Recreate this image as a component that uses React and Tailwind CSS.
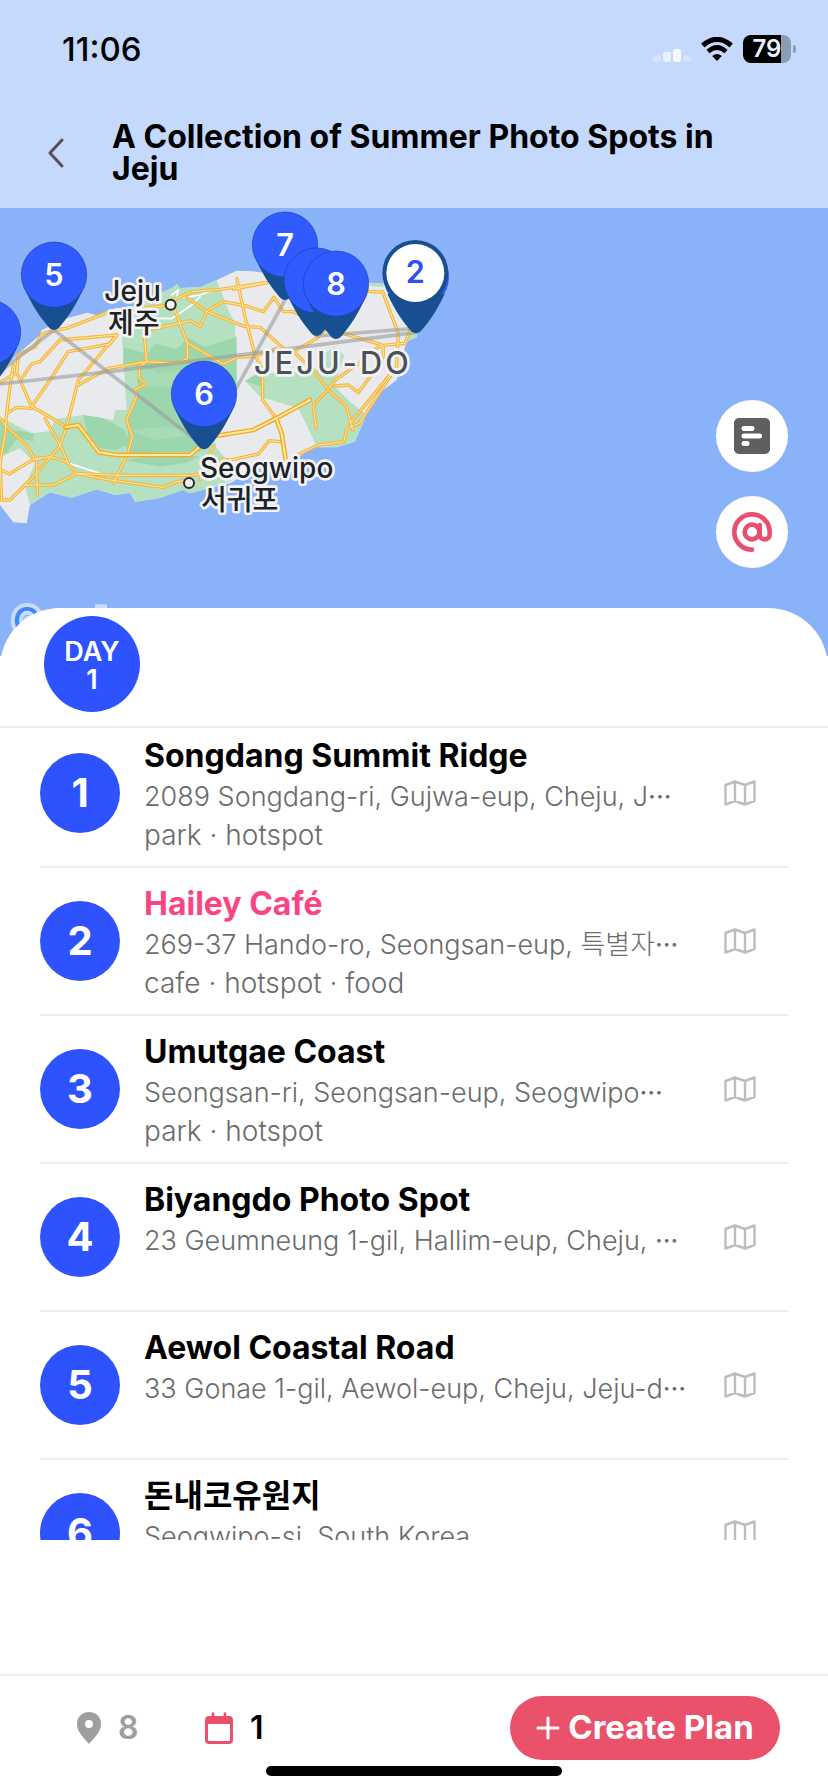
import React from "react";

const places = [
  { name: "Songdang Summit Ridge", address: "2089 Songdang-ri, Gujwa-eup, Cheju, J", cut: true, tags: "park · hotspot" },
  { name: "Hailey Café", address: "269-37 Hando-ro, Seongsan-eup, 특별자", cut: true, tags: "cafe · hotspot · food", active: true },
  { name: "Umutgae Coast", address: "Seongsan-ri, Seongsan-eup, Seogwipo", cut: true, tags: "park · hotspot" },
  { name: "Biyangdo Photo Spot", address: "23 Geumneung 1-gil, Hallim-eup, Cheju, ", cut: true },
  { name: "Aewol Coastal Road", address: "33 Gonae 1-gil, Aewol-eup, Cheju, Jeju-d", cut: true },
  { name: "돈내코유원지", address: "Seogwipo-si, South Korea", cut: false },
];

const roads = [
  "0,548 50,518 55,465 105,440 125,402 162,390 200,385 330,335 420,325 490,318 520,300 575,275 660,268 800,248",
  "55,465 50,518 95,620 135,642 197,680 240,675",
  "65,535 95,492 120,485 180,420 350,405 330,432 205,455 150,540 95,620",
  "350,405 235,540 200,680 178,740 105,825 75,855 30,900 5,900 0,780",
  "235,555 325,505 440,485 530,490 562,475 562,430 545,385 525,330 510,310",
  "40,495 30,560 20,640 15,705 0,790",
  "20,640 50,622 95,625",
  "0,655 20,680 80,735 105,780 125,775",
  "0,808 28,822 100,778 150,770 200,785 228,820 330,840 490,862 530,845 570,840",
  "75,855 160,855 228,822",
  "110,785 112,885",
  "135,655 180,735 205,790",
  "228,820 350,826 570,826 600,822",
  "340,850 382,765 397,710 380,660 410,590 405,570 437,552 418,535 418,500 440,485 432,400",
  "440,390 500,378 570,362 600,380 620,335",
  "565,430 670,492 712,472 765,468 830,445",
  "560,292 620,335 735,380 780,382 850,445",
  "620,335 668,305 740,318 790,335 822,292 850,335 880,335 910,350",
  "710,235 735,350 765,465 788,510 788,600 828,655",
  "700,268 800,248",
  "1108,275 1148,276 1195,400 1190,500 1050,670",
  "1030,400 1150,436 1215,430 1230,390",
  "880,455 950,415 975,390",
  "880,455 940,510 985,570 1040,620 1058,690",
  "985,570 940,615 948,685",
  "985,570 1000,545 1090,480 1135,440 1150,440 1150,470 1125,510 1075,578 1045,555 1005,558",
  "1190,500 1078,670 1040,685 1032,725 955,735 880,770",
  "660,780 700,778 775,762 808,722 840,725",
  "600,840 640,740",
];

const highways = [
  "197,682 235,675 297,757 350,765 570,765 612,730",
  "645,708 760,690 828,655 930,600",
  "828,655 845,700 857,780",
];

const pins = [
  { n: "", x: -36, y: 397 },
  { n: "5", x: 162, y: 224 },
  { n: "7", x: 855, y: 134 },
  { n: "", x: 950, y: 242 },
  { n: "8", x: 1008, y: 251 },
  { n: "6", x: 612, y: 582 },
];

const pinBody = "M-86 47 C-60 105 -35 135 -14 160 Q0 172 14 160 C35 135 60 105 86 47 Z";

function Pin({ n, x, y }) {
  return (
    <g transform={`translate(${x} ${y})`}>
      <path d={pinBody} fill="#174f91" />
      <circle r="98" fill="#2f5bff" stroke="#1f3fb0" strokeWidth="2" />
      <text y="33" textAnchor="middle" fontSize="92" fontWeight="600" fill="#fff">{n}</text>
    </g>
  );
}

function Label({ x, y, children, size = 84, className = "", fill = "#202124" }) {
  return (
    <text x={x} y={y} fontSize={size} fontWeight="500" fill={fill} stroke="#f1f3f6" strokeWidth="16" strokeLinejoin="round" paintOrder="stroke" className={className}>
      {children}
    </text>
  );
}

function IslandMap() {
  return (
    <svg className="absolute top-0 left-0" width="828" height="448" viewBox="0 24 2484 1344" role="img" aria-label="Map of Jeju">
      <path fill="#e8eaed" d="M0 515 L50 465 L120 405 L125 390 L200 355 L262 338 L290 346 L345 325 L395 320 L440 300 L520 262 L530 252 L540 264 L600 262 L650 240 L710 212 L760 214 L840 225 L960 240 L1110 248 L1160 252 L1200 330 L1220 365 L1252 400 L1250 412 L1225 422 L1215 440 L1200 500 L1190 540 L1130 585 L1095 650 L1065 725 L1010 742 L945 742 L870 785 L760 810 L690 850 L640 862 L570 880 L550 870 L475 895 L405 905 L390 878 L345 885 L290 868 L215 893 L150 877 L90 915 L80 970 L40 967 L0 915 Z" />
      <g fill="#b5e1c1">
        <path d="M365 395 L395 320 L440 300 L520 262 L530 252 L540 264 L600 262 L650 240 L685 330 L705 370 L710 560 L690 600 L640 700 L650 745 L690 790 L700 840 L640 862 L570 880 L550 870 L475 895 L405 905 L390 878 L345 885 L290 868 L215 893 L150 877 L90 915 L75 860 L105 790 L60 745 L0 772 L0 650 L95 700 L150 693 L165 657 L250 645 L340 660 L345 630 L380 630 Z" />
        <path d="M735 543 L800 520 L945 515 L975 460 L1005 440 L1033 465 L1020 505 L1005 560 L1050 605 L1100 645 L1065 725 L1010 742 L950 738 L895 625 L780 590 Z" />
        <path d="M1225 400 L1253 400 L1250 412 L1222 424 Z M1110 248 L1150 252 L1150 262 L1110 258 Z" />
      </g>
      <g fill="#9bd6ad">
        <path d="M370 440 L440 462 L465 430 L530 447 L565 415 L615 440 L650 430 L710 410 L710 560 L690 600 L640 700 L600 755 L390 760 L370 730 L385 700 L375 660 L410 590 L415 500 L370 500 Z" />
        <path d="M250 645 L310 655 L375 690 L385 730 L350 750 L300 745 L262 700 Z" />
        <path d="M375 780 L440 770 L600 768 L560 788 L480 800 Z" />
        <path d="M0 660 L40 690 L100 700 L100 725 L55 712 L20 760 L0 765 Z" />
        <path d="M735 543 L780 515 L785 560 Z" />
      </g>
      <path d="M420 500 L480 520 L600 500 L640 520 L570 560 L430 560 Z M385 690 L500 680 L600 700 L470 720 Z" fill="#a8dcb7" />
      <g fill="none" strokeLinejoin="round" strokeLinecap="round">
        <g stroke="#fff" strokeWidth="5">
          <path d="M200 788 L325 828 M515 285 L535 270 L530 290 L560 292 L600 285 L638 270 M480 355 L515 356 L575 315 L600 290 M400 340 L440 320 L490 322 M600 835 L690 815 L760 800" />
        </g>
        <g stroke="#f6b73c" strokeWidth="10">
          {roads.map((r) => <polyline key={r} points={r} />)}
        </g>
        <g stroke="#fde9a9" strokeWidth="3">
          {roads.map((r) => <polyline key={r} points={r} />)}
        </g>
        <g stroke="#f6a91f" strokeWidth="14">
          {highways.map((r) => <polyline key={r} points={r} />)}
        </g>
        <g stroke="#fde79b" strokeWidth="6">
          {highways.map((r) => <polyline key={r} points={r} />)}
        </g>
        <g stroke="#9b9b9b" strokeOpacity="0.6" strokeWidth="11">
          <path d="M0 552 L330 515 L1249 397" />
          <path d="M950 408 L1249 385" />
          <path d="M0 515 L162 390 L612 740 L855 300" />
        </g>
      </g>
      <g fill="#f4f4f4" stroke="#2b2b2b" strokeWidth="6">
        <circle cx="512" cy="314" r="15" />
        <circle cx="567" cy="849" r="15" />
      </g>
      <Label x={313} y={302}>Jeju</Label>
      <Label x={324} y={399}>제주</Label>
      <Label x={600} y={834}>Seogwipo</Label>
      <Label x={603} y={929}>서귀포</Label>
      <Label x={762} y={522} size={92} fill="#4d5156" className="tracking-widest">JEJU-DO</Label>
      {pins.map((p) => <Pin key={`${p.x}-${p.y}`} {...p} />)}
      <circle cx="1249" cy="231" r="98" fill="#2f5bff" />
      <g transform="translate(1246 219)">
        <circle r="99" fill="#174f91" />
        <path d={pinBody} fill="#174f91" transform="translate(2 15)" />
        <circle y="-2" r="87" fill="#fff" />
        <text y="31" textAnchor="middle" fontSize="92" fontWeight="600" fill="#2f50f0">2</text>
      </g>
      <text x="38" y="1302" fontSize="112" fontWeight="500" fill="#4285f4" stroke="#c8dcfb" strokeWidth="24" strokeLinejoin="round" paintOrder="stroke">G</text>
      <rect x="285" y="1213" width="36" height="30" fill="#c8dcfb" />
    </svg>
  );
}

function MapIcon() {
  return (
    <svg width="32" height="26" viewBox="0 0 32 26" fill="none" stroke="#bdbdbd" strokeWidth="2.4" strokeLinejoin="round" aria-hidden="true">
      <path d="M1.5 5 L11 1.5 L21 5 L30.5 1.5 V21 L21 24.5 L11 21 L1.5 24.5 Z M11 1.5 V21 M21 5 V24.5" />
    </svg>
  );
}

function StatusBar() {
  return (
    <div className="flex h-[98px] items-center justify-between pr-8 pl-[62px]">
      <time className="text-[33px] leading-10 font-medium">11:06</time>
      <div className="flex items-center gap-2.5">
        <svg width="38" height="28" viewBox="0 0 38 28" fill="#fff" aria-hidden="true">
          <rect x="0" y="20" width="8" height="7" rx="2" fillOpacity="0.3" />
          <rect x="10" y="17" width="8" height="10" rx="2" fillOpacity="0.6" />
          <rect x="20" y="14" width="8" height="13" rx="2" fillOpacity="0.8" />
          <rect x="30" y="20" width="8" height="7" rx="3" fillOpacity="0.3" />
        </svg>
        <svg width="32" height="24" viewBox="0 0 32 24" fill="none" stroke="#000" aria-hidden="true">
          <path d="M1.8 8.5 Q16 -3.8 30.2 8.5" strokeWidth="5" />
          <path d="M7 14.5 Q16 6.5 25 14.5" strokeWidth="4.6" />
          <path d="M16 24 L11.2 19 Q16 15 20.8 19 Z" fill="#000" stroke="none" />
        </svg>
        <div className="flex items-center gap-0.5">
          <div className="flex h-7 w-12 items-center justify-center rounded-lg bg-linear-to-r from-black from-79% to-[#8c9cb4] to-79% text-[24px] font-semibold text-[#e8f0ff]">79</div>
          <div className="h-2 w-[3px] rounded-r-full bg-[#8c9cb4]" />
        </div>
      </div>
    </div>
  );
}

function PlaceRow({ place, index }) {
  return (
    <li className="flex h-37 shrink-0 items-center gap-6 border-b-2 border-[#eeeeee]">
      <span className="flex size-20 shrink-0 items-center justify-center rounded-full bg-[#2f52ff] text-[40px] font-bold text-white">{index}</span>
      <div className="min-w-0 flex-1 self-start pt-3.5">
        <h2 className={place.active ? "truncate text-[32px] leading-11 font-bold text-[#fb4583]" : "truncate text-[32px] leading-11 font-bold text-black"}>{place.name}</h2>
        <p className="text-[27px] leading-[38px] font-light whitespace-nowrap text-[#6b6b6b]">
          {place.address}
          {place.cut && <span className="font-normal">···</span>}
        </p>
        {place.tags && <p className="text-[28px] leading-[38px] font-light whitespace-nowrap text-[#6b6b6b]">{place.tags}</p>}
      </div>
      <button type="button" aria-label={`Show ${place.name} on map`} className="mr-8 shrink-0">
        <MapIcon />
      </button>
    </li>
  );
}

export default function App() {
  return (
    <div className="flex h-screen flex-col overflow-hidden bg-white font-['Inter','Noto_Sans_CJK_KR',sans-serif] text-black">
      <header className="shrink-0 bg-[#c5d9fc]">
        <StatusBar />
        <div className="flex h-[110px] items-center gap-12 pr-12 pl-12">
          <button type="button" aria-label="Back" className="shrink-0">
            <svg width="16" height="30" viewBox="0 0 16 30" fill="none" stroke="#55505c" strokeWidth="3" strokeLinecap="round" strokeLinejoin="round" aria-hidden="true">
              <path d="M14 2 L2 15 L14 28" />
            </svg>
          </button>
          <h1 className="text-[32px] leading-8 font-bold">A Collection of Summer Photo Spots in Jeju</h1>
        </div>
      </header>

      <section className="relative h-[448px] shrink-0 overflow-hidden bg-[#8ab2f8]">
        <IslandMap />
        <div className="absolute top-48 right-10 flex flex-col gap-6">
          <button type="button" aria-label="Notes" className="flex size-18 items-center justify-center rounded-full bg-white">
            <svg width="36" height="36" viewBox="0 0 36 36" aria-hidden="true">
              <rect width="36" height="36" rx="5" fill="#5f5f5f" />
              <path d="M10 10.5 H18 M10 18 H25.5 M10 25.5 H13" stroke="#fff" strokeWidth="5" strokeLinecap="round" />
            </svg>
          </button>
          <button type="button" aria-label="Mentions" className="flex size-18 items-center justify-center rounded-full bg-white">
            <svg width="40" height="40" viewBox="156 399 120 120" fill="none" stroke="#e9506f" strokeWidth="14" strokeLinecap="round" aria-hidden="true">
              <circle cx="216" cy="459" r="22" />
              <path d="M239 438 V468 a15 13 0 0 0 30 0 V459 a53 53 0 1 0 -53 53" />
            </svg>
          </button>
        </div>
      </section>

      <nav aria-label="Days" className="relative -mt-12 h-30 shrink-0 rounded-t-[60px] border-b-2 border-[#eeeeee] bg-white px-11 pt-2">
        <button type="button" className="flex size-24 flex-col items-center justify-center rounded-full bg-[#2f52ff] pt-1 text-[27px] leading-7 font-semibold text-white">
          <span>DAY</span>
          <span>1</span>
        </button>
      </nav>

      <main className="mb-[134px] min-h-0 flex-1 overflow-hidden px-10">
        <ol className="-mt-2 flex flex-col">
          {places.map((place, i) => <PlaceRow key={place.name} place={place} index={i + 1} />)}
        </ol>
      </main>

      <footer className="flex shrink-0 flex-col items-center border-t-2 border-[#eeeeee] bg-white pt-5 pb-4">
        <div className="flex w-full items-center pr-12 pl-19">
          <div className="flex w-32 items-center gap-4 text-[32px] font-semibold text-[#9e9e9e]">
            <svg width="26" height="32" viewBox="0 0 26 32" aria-hidden="true">
              <path fillRule="evenodd" fill="#9e9e9e" d="M13 0 C5.8 0 1 5.2 1 12 C1 20 8 26 13 32 C18 26 25 20 25 12 C25 5.2 20.2 0 13 0 Z M13 8 a4 4 0 1 1 0 8 a4 4 0 1 1 0 -8 Z" />
            </svg>
            <span>8</span>
          </div>
          <div className="flex items-center gap-4 text-[32px] font-semibold">
            <svg width="30" height="32" viewBox="0 0 30 32" aria-hidden="true">
              <path fillRule="evenodd" fill="#e9506b" d="M5 4 H25 Q29 4 29 8 V28 Q29 32 25 32 H5 Q1 32 1 28 V8 Q1 4 5 4 Z M4 12 V27.5 Q4 29 5.5 29 H24.5 Q26 29 26 27.5 V12 Z" />
              <path d="M9 1.5 V6 M21 1.5 V6" stroke="#e9506b" strokeWidth="2.6" strokeLinecap="round" />
            </svg>
            <span>1</span>
          </div>
          <button type="button" className="ml-auto flex h-16 w-[270px] items-center justify-center gap-2 rounded-full bg-[#ea526c] text-[33px] font-bold text-white">
            <svg width="24" height="24" viewBox="0 0 24 24" stroke="#fff" strokeWidth="3" strokeLinecap="round" aria-hidden="true">
              <path d="M12 2 V22 M2 12 H22" />
            </svg>
            Create Plan
          </button>
        </div>
        <div className="mt-1.5 h-2.5 w-74 rounded-full bg-black" />
      </footer>
    </div>
  );
}
